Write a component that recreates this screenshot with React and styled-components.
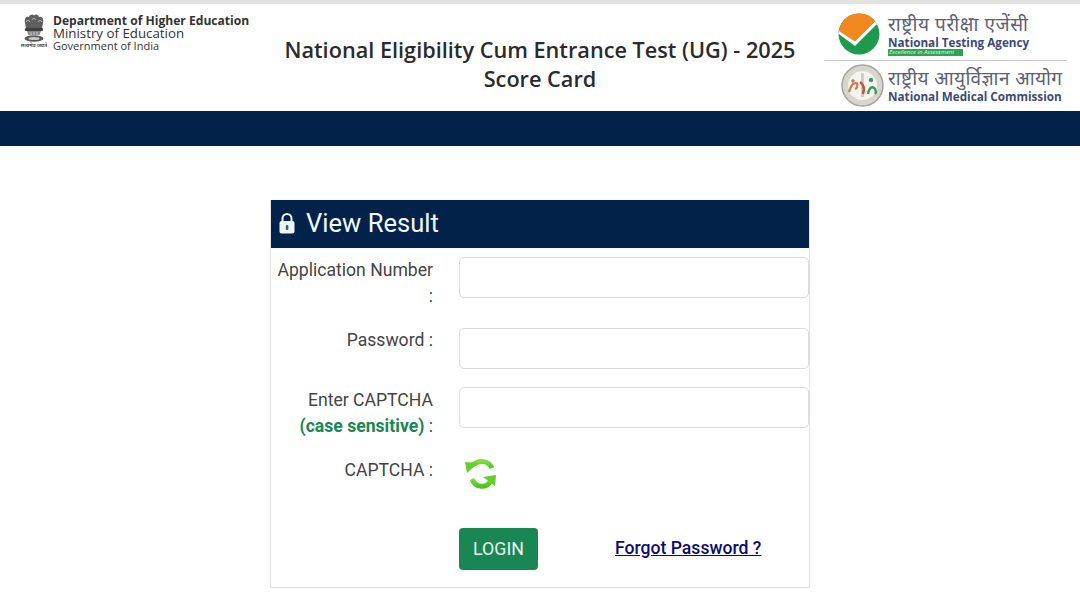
import React from "react";
import styled, { createGlobalStyle } from "styled-components";

const GlobalStyle = createGlobalStyle`
  html, body {
    margin: 0;
    padding: 0;
    background: #fff;
    font-family: Roboto, "Liberation Sans", sans-serif;
    color: #3a3a3a;
  }
  * { box-sizing: border-box; }
`;

const Page = styled.div`
  width: 1080px;
  height: 605px;
  overflow: hidden;
  border-top: 4px solid #e2e2e2;
`;

const Header = styled.header`
  display: grid;
  grid-template-columns: 270px 1fr 256px;
  height: 107px;
`;

const Ministry = styled.div`
  display: flex;
  align-items: flex-start;
  gap: 4px;
  padding: 10px 0 0 19px;
`;

const EmblemBox = styled.div`
  width: 30px;
  display: flex;
  flex-direction: column;
  align-items: center;
`;

const EmblemCaption = styled.div`
  font-family: "Noto Sans", sans-serif;
  font-size: 5.2px;
  line-height: 7px;
  font-weight: 600;
  color: #444;
  white-space: nowrap;
`;

const MinistryText = styled.div`
  font-family: "Open Sans", sans-serif;
  color: #333;
  white-space: nowrap;
`;

const MinistryLine = styled.div`
  font-size: ${(p) => p.$size}px;
  font-weight: ${(p) => (p.$bold ? 700 : 400)};
  line-height: ${(p) => p.$lh}px;
`;

const Title = styled.h1`
  margin: 0 0 0 -14px;
  padding-top: 31px;
  text-align: center;
  font-family: "Open Sans", sans-serif;
  font-size: 21.7px;
  font-weight: 600;
  line-height: 29px;
  color: #2b2b2b;
`;

const Logos = styled.div`
  display: flex;
  flex-direction: column;
`;

const LogoRow = styled.div`
  display: flex;
  align-items: center;
  gap: ${(p) => p.$gap}px;
  height: ${(p) => p.$h}px;
  padding: ${(p) => p.$top}px 0 0 ${(p) => p.$pad}px;
`;

const Divider = styled.div`
  height: 1px;
  width: 243px;
  background: #c9c9c9;
`;

const LogoText = styled.div`
  display: flex;
  flex-direction: column;
  white-space: nowrap;
`;

const Hindi = styled.div`
  font-family: "Noto Sans", "DejaVu Sans", sans-serif;
  font-size: 19px;
  line-height: 22px;
  letter-spacing: ${(p) => p.$spacing}px;
  color: #5c6174;
`;

const Agency = styled.div`
  font-family: "Open Sans", sans-serif;
  font-size: 11.7px;
  font-weight: 700;
  line-height: 14px;
  color: #3d4a78;
`;

const Tagline = styled.div`
  align-self: flex-start;
  background: #2ea44f;
  color: #dff5e4;
  font-family: "Open Sans", sans-serif;
  font-size: 6px;
  font-style: italic;
  line-height: 7px;
  padding: 0 1px;
  width: 75px;
  white-space: nowrap;
  overflow: hidden;
`;

const NavBar = styled.div`
  height: 35px;
  background: #022249;
`;

const Card = styled.section`
  width: 540px;
  height: 388px;
  margin: 54px 0 0 270px;
  border: 1px solid #e3e3e3;
  border-top: 0;
  display: flex;
  flex-direction: column;
`;

const CardHead = styled.div`
  height: 48px;
  background: #022249;
  color: #f2f8fc;
  display: flex;
  align-items: center;
  gap: 11px;
  padding: 0 0 2px 8px;
  font-size: 25.6px;
`;

const Form = styled.form`
  display: flex;
  flex-direction: column;
  padding-top: 9px;
`;

const Row = styled.div`
  display: grid;
  grid-template-columns: 162px 350px;
  column-gap: 26px;
  align-items: start;
  height: ${(p) => p.$h}px;
`;

const Label = styled.label`
  text-align: right;
  font-size: 17.6px;
  line-height: 26px;
  color: #444;
  margin-top: ${(p) => p.$shift || 0}px;
`;

const Hint = styled.b`
  color: #198754;
  font-weight: 700;
`;

const Input = styled.input`
  width: 350px;
  height: 41px;
  background: #fff;
  border: 1px solid #d9dbdd;
  border-radius: 5px;
  outline: none;
`;

const Refresh = styled.button`
  width: 44px;
  height: 36px;
  padding: 0;
  background: none;
  border: 0;
  display: flex;
  align-items: center;
  justify-content: center;
`;

const Actions = styled.div`
  display: flex;
  align-items: center;
  padding-left: 188px;
`;

const Login = styled.button`
  width: 79px;
  height: 42px;
  padding: 0 0 2px;
  background: #198754;
  color: #e9f7ef;
  border: 0;
  border-radius: 4px;
  font-family: Roboto, sans-serif;
  font-size: 17.8px;
`;

const Forgot = styled.a`
  margin: 0 0 2px 77px;
  color: #0a0a78;
  font-size: 17.6px;
  font-weight: 500;
  text-decoration: underline;
`;

const Emblem = () => (
  <svg width="24" height="28" viewBox="0 0 24 28">
    <g fill="#5f5f5f">
      <path d="M3 9C2 5 4 2 7 3C8 0 11 0 12 1.500C13 0 16 0 17 3C20 2 22 5 21 9L20 14H4Z" />
      <path d="M4 8C5 6 7 6 8 8M10 6C11 4 13 4 14 6M16 8C17 6 19 6 20 8" stroke="#c4c4c4" strokeWidth="1" fill="none" />
      <rect x="3" y="14" width="18" height="3" rx="1" fill="#3f3f3f" />
      <path d="M5 17H19L17.500 21H6.500Z" fill="#868686" />
      <path d="M9 18V21M12 18V21M15 18V21" stroke="#e0e0e0" strokeWidth="0.8" />
      <ellipse cx="12" cy="24.500" rx="9.500" ry="3.200" fill="#5a5a5a" />
      <ellipse cx="12" cy="24.500" rx="5.500" ry="1.500" fill="#c8c8c8" />
    </g>
  </svg>
);

const NtaMark = () => (
  <svg width="42" height="42" viewBox="0 0 42 42">
    <circle cx="21" cy="21" r="20.500" fill="#1e9a4c" />
    <path d="M0.700 19A20.500 20.500 0 0 1 37 8L17 29Z" fill="#f0881e" />
    <path d="M0.800 21L17 33L39 11L37 8.500L17 28.500L1 18Z" fill="#fff" />
  </svg>
);

const NmcMark = () => (
  <svg width="43" height="43" viewBox="0 0 43 43">
    <circle cx="21.500" cy="21.500" r="20.500" fill="#d6d6cf" stroke="#a3a39a" strokeWidth="1.500" />
    <circle cx="21.500" cy="21.500" r="14.500" fill="#f5f4ef" />
    <path d="M8 28C10 22 11 19 15 19C17 19 17 24 14 25" stroke="#d8734f" strokeWidth="2.200" fill="none" />
    <path d="M21.500 9V33" stroke="#cfcfc9" strokeWidth="3" />
    <path d="M19 18C22 20 24 24 22 30" stroke="#c8503a" strokeWidth="2.500" fill="none" />
    <path d="M27 30C28 24 31 21 34 25C35 27 35 29 34 30" stroke="#3a9a5c" strokeWidth="2.400" fill="none" />
    <circle cx="30" cy="16" r="2.200" fill="#3a9a5c" />
    <circle cx="12" cy="17" r="1.800" fill="#d8734f" />
  </svg>
);

const LockIcon = () => (
  <svg width="16" height="22" viewBox="0 0 16 22">
    <path d="M3.500 10V6.500a4.500 4.500 0 0 1 9 0V10" fill="none" stroke="#eef3f6" strokeWidth="2" />
    <rect x="0.500" y="9" width="15" height="12.500" rx="2" fill="#eef3f6" />
    <rect x="6.800" y="13" width="2.600" height="5" rx="1" fill="#44566e" />
  </svg>
);

const RefreshIcon = () => (
  <svg width="36" height="36" viewBox="0 0 36 36">
    <defs>
      <linearGradient id="refreshGreen" x1="0" y1="0" x2="0" y2="1">
        <stop offset="0" stopColor="#7fdc3c" />
        <stop offset="1" stopColor="#4fc51e" />
      </linearGradient>
    </defs>
    <path d="M29 11C26 4 16 2 10 8" fill="none" stroke="url(#refreshGreen)" strokeWidth="5" />
    <path d="M2 5L15 6L4 16Z" fill="#62d02a" />
    <path d="M9 22C12 30 22 32 27 25" fill="none" stroke="url(#refreshGreen)" strokeWidth="5" />
    <path d="M20 20L33 18L32 29Z" fill="#62d02a" />
  </svg>
);

const App = () => (
  <Page>
    <GlobalStyle />
    <Header>
      <Ministry>
        <EmblemBox>
          <Emblem />
          <EmblemCaption>सत्यमेव जयते</EmblemCaption>
        </EmblemBox>
        <MinistryText>
          <MinistryLine $size={12.1} $lh={13} $bold>Department of Higher Education</MinistryLine>
          <MinistryLine $size={13.3} $lh={13}>Ministry of Education</MinistryLine>
          <MinistryLine $size={11} $lh={11}>Government of India</MinistryLine>
        </MinistryText>
      </Ministry>
      <Title>
        National Eligibility Cum Entrance Test (UG) - 2025
        <br />
        Score Card
      </Title>
      <Logos>
        <LogoRow $h={56} $top={4} $pad={14} $gap={8}>
          <NtaMark />
          <LogoText>
            <Hindi $spacing={0.6}>राष्ट्रीय परीक्षा एजेंसी</Hindi>
            <Agency>National Testing Agency</Agency>
            <Tagline>Excellence in Assessment</Tagline>
          </LogoText>
        </LogoRow>
        <Divider />
        <LogoRow $h={48} $top={0} $pad={17} $gap={4}>
          <NmcMark />
          <LogoText>
            <Hindi $spacing={0.4}>राष्ट्रीय आयुर्विज्ञान आयोग</Hindi>
            <Agency>National Medical Commission</Agency>
          </LogoText>
        </LogoRow>
      </Logos>
    </Header>
    <NavBar />
    <Card>
      <CardHead>
        <LockIcon />
        View Result
      </CardHead>
      <Form>
        <Row $h={71}>
          <Label>Application Number :</Label>
          <Input type="text" />
        </Row>
        <Row $h={59}>
          <Label $shift={-1}>Password :</Label>
          <Input type="password" />
        </Row>
        <Row $h={70}>
          <Label>
            Enter CAPTCHA
            <br />
            <Hint>(case sensitive)</Hint> :
          </Label>
          <Input type="text" />
        </Row>
        <Row $h={71}>
          <Label>CAPTCHA :</Label>
          <Refresh type="button">
            <RefreshIcon />
          </Refresh>
        </Row>
        <Actions>
          <Login type="button">LOGIN</Login>
          <Forgot href="#">Forgot Password ?</Forgot>
        </Actions>
      </Form>
    </Card>
  </Page>
);

export default App;
